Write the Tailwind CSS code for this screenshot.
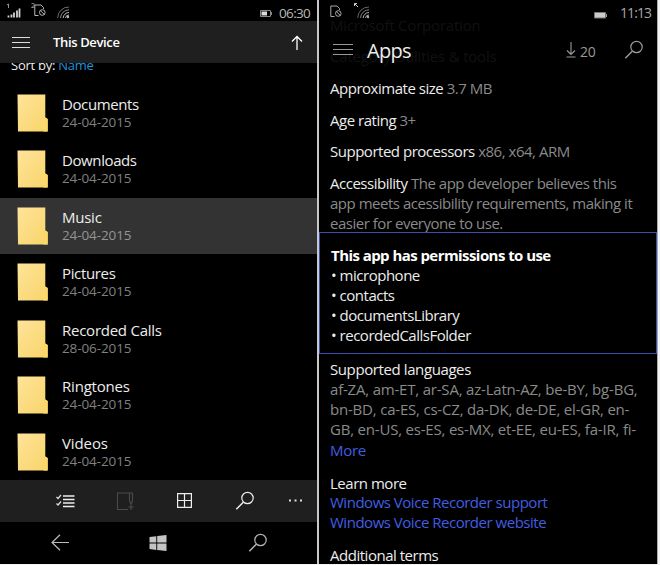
<!DOCTYPE html>
<html lang="en">
<head>
<meta charset="utf-8">
<title>File Explorer and Store</title>
<script src="https://cdn.jsdelivr.net/npm/@tailwindcss/browser@4"></script>
</head>
<body class="w-[660px] h-[565px] overflow-hidden bg-[#f4f4f4] font-['Open_Sans','Noto_Sans',sans-serif]">
<svg class="absolute h-0 w-0">
  <defs>
    <linearGradient id="fg" x1="0" y1="0" x2="1" y2="1"><stop offset="0" stop-color="#ffe49a"/><stop offset="1" stop-color="#f8d469"/></linearGradient>
  </defs>
  <symbol id="folder" viewBox="0 0 32 38"><path d="M.5.5H28.300V23.500L30.500 25V37.500H1Z" fill="url(#fg)"/><path d="M28.300 23.500 30.800 25V37.500H26.500V25Z" fill="#fbd76c"/></symbol>
  <symbol id="search" viewBox="0 0 20 20"><g fill="none" stroke="currentColor"><circle cx="12.500" cy="7" r="5.700" stroke-width="1.200"/><path d="M8.300 11.200 1.300 18.200" stroke-width="1.500"/></g></symbol>
  <symbol id="sim" viewBox="0 0 12 13"><g fill="none" stroke="currentColor"><path d="M4.500 11.500H.8V1H7L9.500 3.500V5" stroke-width="1"/><circle cx="8.300" cy="8.500" r="2.800"/><path d="M6.300 6.500 10.300 10.500"/></g></symbol>
  <symbol id="wifi" viewBox="0 0 13 13"><g fill="none" stroke="currentColor"><path d="M.7 12A11 11 0 0 1 12 1" opacity=".6"/><path d="M3.500 12A8.500 8.500 0 0 1 12 3.800" opacity=".75"/><path d="M6.200 12A5.800 5.800 0 0 1 12 6.500"/><path d="M8.500 12A3.500 3.500 0 0 1 12 9"/></g><circle cx="11" cy="11" r="1.200" fill="currentColor"/></symbol>
</svg>
<div class="flex h-[564px]">
  <section class="flex h-full w-[317px] shrink-0 flex-col bg-black text-[#ededed]">
    <div class="relative h-[21px] shrink-0 text-[#b8b8b8]">
      <svg class="absolute left-[6px] top-[3px]" width="16" height="16" viewBox="0 0 16 16"><path d="M2.500 14.500V12.500M5.500 14.500V11.500M8 14.500V9.500M11 14.500V7.500M13.500 14.500V5.500" stroke="#d0d0d0" stroke-width="1.800"/><path d="M1 2 2.500 1V5" fill="none" stroke="currentColor" stroke-width=".8"/></svg>
      <span class="absolute left-[31px] top-[2px] text-[7px] leading-[8px]">2</span>
      <svg class="absolute left-[34px] top-[4px]" width="12" height="13"><use href="#sim"/></svg>
      <svg class="absolute left-[57px] top-[6px]" width="13" height="13"><use href="#wifi"/></svg>
      <svg class="absolute left-[260px] top-[10px]" width="12" height="7" viewBox="0 0 12 7"><path d="M.5.5H10.500V6.500H.5Z" fill="none" stroke="#888"/><path d="M1.500 1.500H7V5.500H1.500Z" fill="#ddd"/><path d="M11.500 2V5" stroke="#888"/></svg>
      <span class="absolute left-[279px] top-[3px] text-[13.500px] leading-[20px] tracking-[-0.65px]">06:30</span>
    </div>
    <header class="flex h-[42px] shrink-0 items-center bg-[#1f1f1f] pl-3">
      <svg width="18" height="12" viewBox="0 0 18 12"><path d="M0 1.500H18M0 6.500H18M0 11.500H18" stroke="#ddd"/></svg>
      <h1 class="ml-[23px] w-[70px] whitespace-nowrap text-[13px] font-semibold leading-5 tracking-[-0.35px] text-white">This Device</h1>
      <svg class="ml-[168px]" width="12" height="15" viewBox="0 0 12 15"><path d="M6 15V1.500M1 6.500 6 1.500 11 6.500" fill="none" stroke="#fff" stroke-width="1.300"/></svg>
    </header>
    <div class="h-[21.500px] shrink-0 overflow-hidden pl-[11px]"><p class="-mt-[8px] text-[13px] leading-5 tracking-[-0.25px]">Sort by: <span class="text-[#2492d8]">Name</span></p></div>
    <ul class="flex h-[395.500px] shrink-0 flex-col">
      <li class="flex flex-1 pl-[17px] pt-[9px]"><svg class="shrink-0" width="32" height="38"><use href="#folder"/></svg><div class="ml-[13px]"><p class="text-[15px] leading-[20px] tracking-[-0.4px]">Documents</p><p class="-mt-[1px] text-[13.500px] leading-[18px] tracking-[-0.1px] text-[#808080]">24-04-2015</p></div></li>
      <li class="flex flex-1 pl-[17px] pt-[9px]"><svg class="shrink-0" width="32" height="38"><use href="#folder"/></svg><div class="ml-[13px]"><p class="text-[15px] leading-[20px] tracking-[-0.4px]">Downloads</p><p class="-mt-[1px] text-[13.500px] leading-[18px] tracking-[-0.1px] text-[#808080]">24-04-2015</p></div></li>
      <li class="flex flex-1 bg-[#333] pl-[17px] pt-[9px]"><svg class="shrink-0" width="32" height="38"><use href="#folder"/></svg><div class="ml-[13px]"><p class="text-[15px] leading-[20px] tracking-[-0.25px]">Music</p><p class="-mt-[1px] text-[13.500px] leading-[18px] tracking-[-0.1px] text-[#949494]">24-04-2015</p></div></li>
      <li class="flex flex-1 pl-[17px] pt-[9px]"><svg class="shrink-0" width="32" height="38"><use href="#folder"/></svg><div class="ml-[13px]"><p class="text-[15px] leading-[20px] tracking-[-0.35px]">Pictures</p><p class="-mt-[1px] text-[13.500px] leading-[18px] tracking-[-0.1px] text-[#808080]">24-04-2015</p></div></li>
      <li class="flex flex-1 pl-[17px] pt-[9px]"><svg class="shrink-0" width="32" height="38"><use href="#folder"/></svg><div class="ml-[13px]"><p class="text-[15px] leading-[20px] tracking-[-0.25px]">Recorded Calls</p><p class="-mt-[1px] text-[13.500px] leading-[18px] tracking-[-0.1px] text-[#808080]">28-06-2015</p></div></li>
      <li class="flex flex-1 pl-[17px] pt-[9px]"><svg class="shrink-0" width="32" height="38"><use href="#folder"/></svg><div class="ml-[13px]"><p class="text-[15px] leading-[20px] tracking-[-0.2px]">Ringtones</p><p class="-mt-[1px] text-[13.500px] leading-[18px] tracking-[-0.1px] text-[#808080]">24-04-2015</p></div></li>
      <li class="flex flex-1 pl-[17px] pt-[9px]"><svg class="shrink-0" width="32" height="38"><use href="#folder"/></svg><div class="ml-[13px]"><p class="text-[15px] leading-[20px] tracking-[-0.1px]">Videos</p><p class="-mt-[1px] text-[13.500px] leading-[18px] tracking-[-0.1px] text-[#808080]">24-04-2015</p></div></li>
    </ul>
    <div class="flex h-[42px] shrink-0 items-center bg-[#1f1f1f] pb-px pl-[56px]">
      <svg width="19" height="14" viewBox="0 0 19 14"><path d="M7 2H18.500M7 5.500H18.500M7 9H18.500M7 12.500H18.500" stroke="#eee" stroke-width="1.400"/><path d="M.5 3 2 4.500 5 1M.5 9.500 2 11 5 7.500" fill="none" stroke="#ddd" stroke-width="1.200"/></svg>
      <svg class="ml-[41px]" width="20" height="20" viewBox="0 0 20 20"><path d="M12 18.500H1.500V2H16.500V10L15 13 13.500 10V2M15 13V19M12.500 16H18" fill="none" stroke="#4b4b4b" stroke-width="1.100"/></svg>
      <svg class="ml-[41px]" width="15" height="15" viewBox="0 0 15 15"><path d="M.6.600H14.400V14.400H.6ZM7.500.6V14.400M.6 7.500H14.400" fill="none" stroke="#eee" stroke-width="1.200"/></svg>
      <svg class="ml-[43px] text-[#eee]" width="20" height="20"><use href="#search"/></svg>
      <svg class="ml-[34px]" width="14" height="3" viewBox="0 0 14 3"><path d="M0 .5h2v2H0ZM5.500.5h2v2h-2ZM11 .5h2v2h-2Z" fill="#ddd"/></svg>
    </div>
    <nav class="flex h-[42px] shrink-0 items-center pb-px pl-[51px]">
      <svg width="18" height="17" viewBox="0 0 18 17"><path d="M18 8.500H1M9 .8 1 8.500 9 16.200" fill="none" stroke="#bbb" stroke-width="1.200"/></svg>
      <svg class="ml-[80px]" width="18" height="16" viewBox="0 0 18 16"><path d="M.5 2 7.300 1.200V7.600H.5ZM8.200 1.100 17.500 0V7.600H8.200ZM.5 8.500H7.300V14.900L.5 14ZM8.200 8.500H17.500V16L8.200 15Z" fill="#c4c4c4"/></svg>
      <svg class="ml-[81px] text-[#b5b5b5]" width="20" height="20"><use href="#search"/></svg>
    </nav>
  </section>
  <div class="w-[2px] shrink-0 bg-[#c8c8c8]"></div>
  <section class="relative flex h-full w-[338px] shrink-0 flex-col overflow-hidden bg-black text-[15px] leading-5 tracking-[-0.48px] text-[#ededed]">
    <div class="absolute left-[11px] top-[15px] tracking-[-0.2px] text-[#111]"><p>Microsoft Corporation</p><p class="mt-[11px]">Category Utilities &amp; tools</p></div>
    <div class="relative h-[21px] shrink-0 text-[#a8a8a8]">
      <svg class="absolute left-[11px] top-[5px]" width="12" height="13"><use href="#sim"/></svg>
      <svg class="absolute left-[38px] top-[6px]" width="13" height="13"><use href="#wifi"/></svg>
      <svg class="absolute left-[35px] top-[3px]" width="5" height="5" viewBox="0 0 5 5"><path d="M.5 3V.5H3M.5.5 4 4" fill="none" stroke="#ccc"/></svg>
      <svg class="absolute left-[275px] top-[12px]" width="13" height="7" viewBox="0 0 13 7"><path d="M.5.5H11.500V6H.5Z" fill="#ccc" stroke="#777"/><path d="M12.500 2V5" stroke="#999"/></svg>
      <span class="absolute left-[301px] top-[3px] text-[14px] leading-5 tracking-[-0.9px]">11:13</span>
    </div>
    <header class="relative flex h-[57px] shrink-0 items-center pl-[14px]">
      <svg width="20" height="12" viewBox="0 0 20 12"><path d="M0 .5H20M0 5.500H20M0 10.500H20" stroke="#999"/></svg>
      <h1 class="ml-[14px] mt-[3px] w-[44px] text-[20px] leading-7 tracking-[-0.7px]">Apps</h1>
      <svg class="ml-[155px]" width="10" height="16" viewBox="0 0 10 16"><path d="M5 0V12.500M1 8.500 5 12.500 9 8.500M.5 15H9.500" fill="none" stroke="#999" stroke-width="1.100"/></svg>
      <span class="ml-[4px] mt-[5px] w-[18px] text-[14px] tracking-[-0.3px] text-[#999]">20</span>
      <svg class="ml-[26px] text-[#999]" width="20" height="20"><use href="#search"/></svg>
    </header>
    <div class="pl-[11px] text-[#8a8a8a]">
      <p><span class="text-[#ededed]">Approximate size</span> 3.7 MB</p>
      <p class="mt-[12px]"><span class="text-[#ededed]">Age rating</span> 3+</p>
      <p class="mt-[11px]"><span class="text-[#ededed]">Supported processors</span> x86, x64, ARM</p>
      <p class="mt-[12px] whitespace-nowrap"><span class="text-[#ededed]">Accessibility</span> The app developer believes this<br>app meets acessibility requirements, making it<br>easier for everyone to use.</p>
    </div>
    <div class="-mt-px h-[122px] w-[338px] shrink-0 border border-[#3c4fae] pl-[11px] pt-[12px]">
      <h2 class="font-bold tracking-[-0.56px] text-white">This app has permissions to use</h2>
      <ul><li>• microphone</li><li>• contacts</li><li>• documentsLibrary</li><li>• recordedCallsFolder</li></ul>
    </div>
    <div class="shrink-0 whitespace-nowrap pl-[11px] pt-[5px]">
      <h2 class="tracking-[-0.4px]">Supported languages</h2>
      <p class="tracking-[-0.2px] text-[#8a8a8a]">af-ZA, am-ET, ar-SA, az-Latn-AZ, be-BY, bg-BG,<br>bn-BD, ca-ES, cs-CZ, da-DK, de-DE, el-GR, en-<br>GB, en-US, es-ES, es-MX, et-EE, eu-ES, fa-IR, fi-</p>
      <p class="mt-px tracking-[-0.3px] text-[#405ee0]">More</p>
      <h2 class="mt-[13px]">Learn more</h2>
      <p class="-mt-px text-[#405ee0]">Windows Voice Recorder support</p>
      <p class="text-[#405ee0]">Windows Voice Recorder website</p>
      <h2 class="mt-[13px]">Additional terms</h2>
    </div>
  </section>
  <div class="w-px shrink-0 bg-[#aaa]"></div>
</div>
</body>
</html>
